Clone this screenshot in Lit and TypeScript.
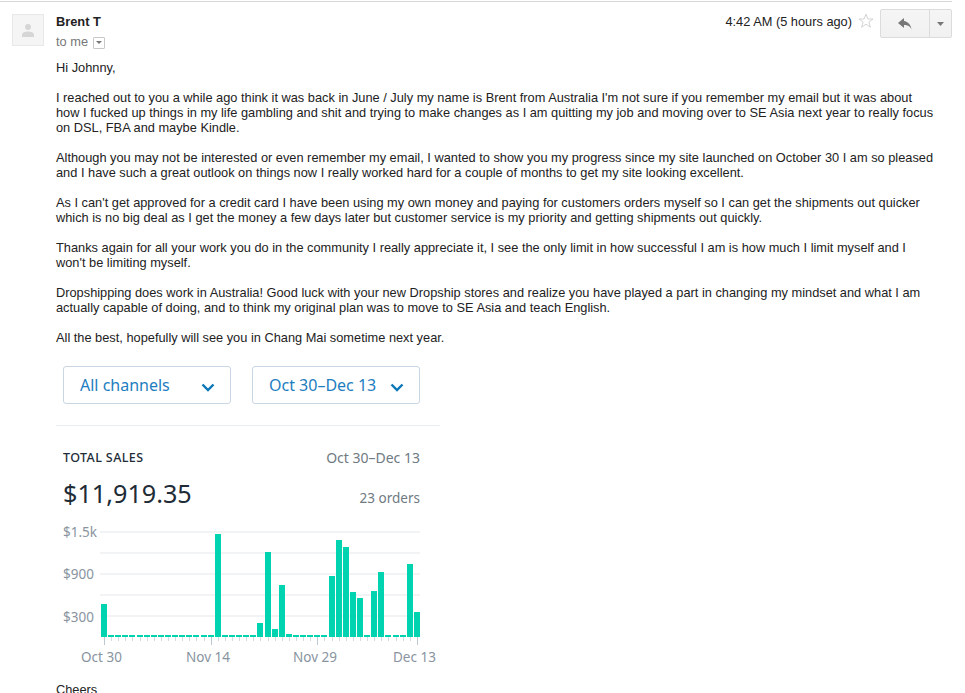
import { LitElement, html, css, svg } from "lit";
import { customElement } from "lit/decorators.js";

const tops: Record<number, number> = {0:604,16:534,22:623,23:552,24:629,25:585,26:634,32:576,33:540,34:547,35:592,36:598,38:591,39:572,43:564,44:612};
const BOTTOM = 637;
const paragraphs = [
  "I reached out to you a while ago think it was back in June / July my name is Brent from Australia I'm not sure if you remember my email but it was about how I fucked up things in my life gambling and shit and trying to make changes as I am quitting my job and moving over to SE Asia next year to really focus on DSL, FBA and maybe Kindle.",
  "Although you may not be interested or even remember my email, I wanted to show you my progress since my site launched on October 30 I am so pleased and I have such a great outlook on things now I really worked hard for a couple of months to get my site looking excellent.",
  "As I can't get approved for a credit card I have been using my own money and paying for customers orders myself so I can get the shipments out quicker which is no big deal as I get the money a few days later but customer service is my priority and getting shipments out quickly.",
  "Thanks again for all your work you do in the community I really appreciate it, I see the only limit in how successful I am is how much I limit myself and I won't be limiting myself.",
  "Dropshipping does work in Australia! Good luck with your new Dropship stores and realize you have played a part in changing my mindset and what I am actually capable of doing, and to think my original plan was to move to SE Asia and teach English.",
  "All the best, hopefully will see you in Chang Mai sometime next year.",
];

@customElement("app-root")
export class AppRoot extends LitElement {
  static styles = css`
    :host { display: block; height: 693px; overflow: hidden; background: #fff; font-family: "Liberation Sans", Arial, sans-serif; font-size: 12.8px; color: #222; }
    .topline { height: 1px; margin: 1px 13px 0 0; background: #d8d8d8; }
    .msg { display: grid; grid-template-columns: 32px 1fr; column-gap: 12px; padding: 11px 13px 0 12px; }
    .avatar { width: 32px; height: 32px; background: #f5f5f5; border: 1px solid #e8e8e8; box-sizing: border-box; display: flex; align-items: center; justify-content: center; margin-top: 1px; }
    .main { min-width: 0; }
    .head { display: flex; justify-content: space-between; height: 47px; }
    .from { font-weight: 700; color: #222; line-height: 15px; margin-top: 1px; }
    .to { color: #777; line-height: 15px; margin-top: 5px; display: flex; align-items: center; gap: 5px; }
    .caretbox { width: 12px; height: 12px; box-sizing: border-box; border: 1px solid #c8c8c8; border-radius: 1px; display: flex; align-items: center; justify-content: center; margin-top: 2px; }
    .right { display: flex; align-items: flex-start; }
    .time { line-height: 15px; margin-top: 1px; color: #222; white-space: nowrap; margin-right: 6px; }
    .star { margin-top: 0; margin-right: 6px; }
    .btns { display: flex; height: 29px; margin-top: -4px; border: 1px solid #dcdcdc; border-radius: 2px; background: linear-gradient(#f5f5f5, #f1f1f1); box-sizing: border-box; }
    .reply { width: 48px; display: flex; align-items: center; justify-content: center; border-right: 1px solid #dcdcdc; }
    .more { width: 21px; display: flex; align-items: center; justify-content: center; }
    .body { color: #222; line-height: 15px; }
    .body p { margin: 0 0 15px; max-width: 879px; }
    .report { width: 384px; margin-top: 21px; font-family: "Noto Sans", sans-serif; }
    .filters { display: flex; gap: 21px; padding: 0 20px 0 7px; }
    .filter { width: 168px; height: 38px; box-sizing: border-box; border: 1px solid #c9d6e4; border-radius: 3px; display: flex; align-items: center; justify-content: space-between; padding: 1px 15px 0 16px; color: #1d7ec0; font-size: 16px; white-space: nowrap; }
    .chev { margin-top: 3px; }
    .card { margin-top: 21px; border-top: 1px solid #e9edef; padding: 23px 20px 0 7px; }
    .row { display: flex; justify-content: space-between; }
    .title { font-size: 12.5px; font-weight: 500; letter-spacing: 0.4px; color: #212b36; line-height: 18px; }
    .range { font-size: 14px; color: #6f7a82; line-height: 18px; }
    .total { font-size: 25.2px; color: #212b36; line-height: 36px; }
    .orders { font-size: 13.5px; color: #6f7a82; line-height: 18px; margin-top: 14px; }
    .row.second { margin-top: 8px; }
    svg.chart { display: block; margin: 7px 0 0 -7px; }
    .chart text { font-family: "Noto Sans", sans-serif; font-size: 13.5px; fill: #8994a0; }
    .cheers { color: #222; line-height: 15px; margin-top: 14px; }
  `;

  private chart() {
    const ox = 56, oy = 518;
    const bars = Array.from({ length: 45 }, (_, i) => {
      const x = Math.round(101 + i * 7.11) - ox;
      const top = tops[i] ?? 635;
      return svg`<rect x=${x} y=${top - oy} width="6" height=${BOTTOM - top} fill="#00d3b0"></rect>`;
    });
    const ticks = Array.from({ length: 45 }, (_, i) => {
      const x = Math.round(104 + i * 7.11) - ox;
      const major = i === 0 || i === 15 || i === 30 || i === 44;
      return svg`<rect x=${x} y=${637 - oy} width="1" height=${major ? 8 : 4} fill=${major ? "#bcc7d2" : "#d3dae1"}></rect>`;
    });
    const grid = [531, 552, 573, 594, 615].map(
      (y) => svg`<rect x=${100 - ox} y=${y - oy} width="320" height="2" fill="#f1f3f4"></rect>`,
    );
    const label = (x: number, y: number, t: string, anchor = "start") =>
      svg`<text x=${x - ox} y=${y - oy} text-anchor=${anchor}>${t}</text>`;
    return html`<svg class="chart" width="390" height="150" viewBox="0 0 390 150">
      ${grid}${bars}${ticks}
      ${label(63, 537, "$1.5k")}${label(63, 579, "$900")}${label(63, 622, "$300")}
      ${label(81, 662, "Oct 30")}${label(186, 662, "Nov 14")}${label(293, 662, "Nov 29")}${label(393, 662, "Dec 13")}
    </svg>`;
  }

  render() {
    const chev = html`<svg class="chev" width="14" height="9" viewBox="0 0 14 9"><path d="M1.500 1.500 7 7l5.500-5.500" fill="none" stroke="#0a78b8" stroke-width="2.400"></path></svg>`;
    return html`
      <div class="topline"></div>
      <div class="msg">
        <div class="avatar">
          <svg width="12" height="13" viewBox="0 0 12 13" fill="#d6d6d6"><circle cx="6" cy="3" r="3"></circle><path d="M0 13v-2c0-2.500 3-3.500 6-3.500s6 1 6 3.500v2z"></path></svg>
        </div>
        <div class="main">
          <div class="head">
            <div>
              <div class="from">Brent T</div>
              <div class="to">to me
                <span class="caretbox"><svg width="6" height="3" viewBox="0 0 6 3"><path d="M0 0h6L3 3z" fill="#777"></path></svg></span>
              </div>
            </div>
            <div class="right">
              <span class="time">4:42 AM (5 hours ago)</span>
              <svg class="star" width="16" height="16" viewBox="0 0 16 16"><path d="M8 1.200 9.900 6h5.100l-4.100 3.100 1.500 5.100L8 11.200l-4.400 3 1.500-5.100L1 6h5.100z" fill="none" stroke="#d4d4d4"></path></svg>
              <div class="btns">
                <div class="reply"><svg width="14" height="12" viewBox="0 0 14 12"><path d="M6 0 0 5l6 5V7c3.500 0 6 1 7.500 4.500C13 7 10 3.500 6 3z" fill="#777"></path></svg></div>
                <div class="more"><svg width="7" height="4" viewBox="0 0 7 4"><path d="M0 0h7L3.500 4z" fill="#777"></path></svg></div>
              </div>
            </div>
          </div>
          <div class="body">
            <p>Hi Johnny,</p>
            ${paragraphs.map((p) => html`<p>${p}</p>`)}
            <div class="report">
              <div class="filters">
                <div class="filter"><span>All channels</span>${chev}</div>
                <div class="filter"><span>Oct 30–Dec 13</span>${chev}</div>
              </div>
              <div class="card">
                <div class="row"><span class="title">TOTAL SALES</span><span class="range">Oct 30–Dec 13</span></div>
                <div class="row second"><span class="total">$11,919.35</span><span class="orders">23 orders</span></div>
                ${this.chart()}
              </div>
            </div>
            <div class="cheers">Cheers</div>
          </div>
        </div>
      </div>
    `;
  }
}
